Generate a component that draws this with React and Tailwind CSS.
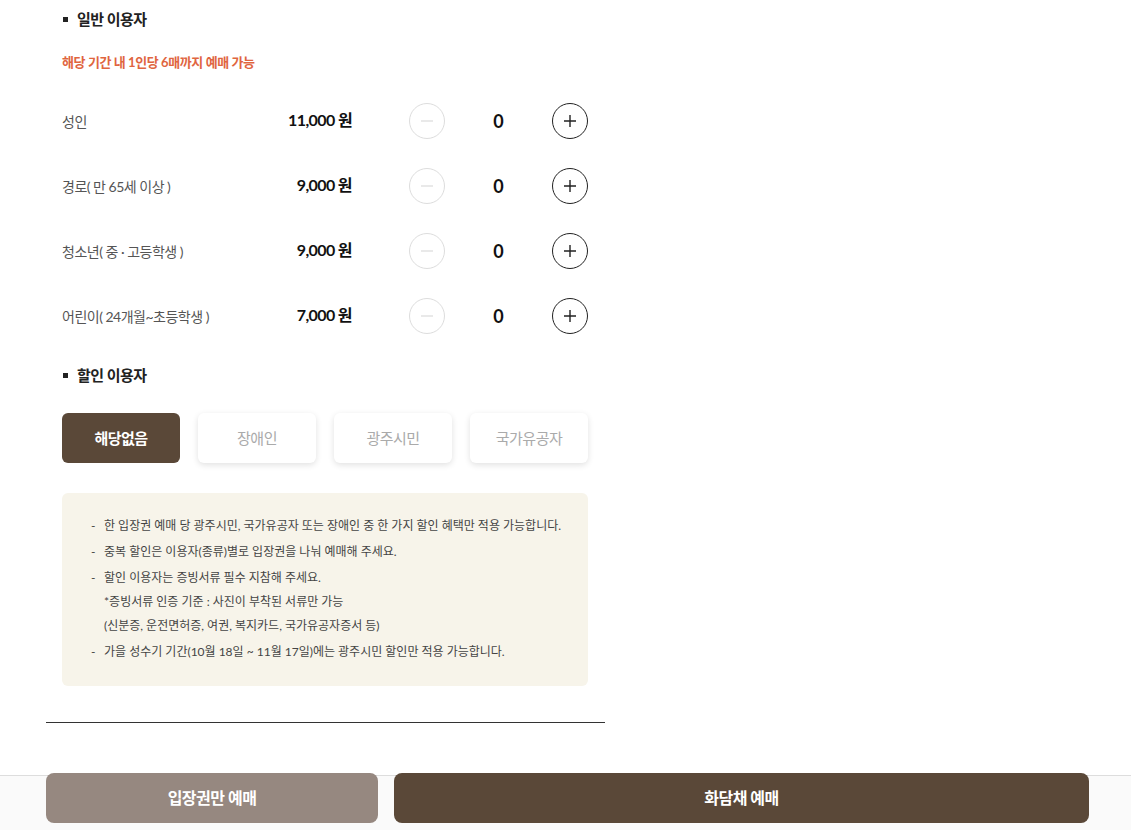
import React from 'react';

const font = { fontFamily: "Lato, 'Noto Sans CJK KR', sans-serif" };

const rows = [
  { label: '성인', price: '11,000 원' },
  { label: '경로( 만 65세 이상 )', price: '9,000 원' },
  { label: '청소년( 중 · 고등학생 )', price: '9,000 원' },
  { label: '어린이( 24개월~초등학생 )', price: '7,000 원' },
];

const discounts = ['해당없음', '장애인', '광주시민', '국가유공자'];

function Heading({ children }) {
  return (
    <div className="flex items-center h-[22px] pl-[1px]">
      <span className="w-[5px] h-[5px] bg-[#222] mr-[9px]" />
      <span className="text-[15px] font-bold text-[#222] tracking-[-0.5px]">{children}</span>
    </div>
  );
}

function Counter() {
  return (
    <div className="flex items-center">
      <button className="w-9 h-9 rounded-full border border-[#ddd] flex items-center justify-center">
        <svg width="14" height="14" viewBox="0 0 14 14">
          <path d="M1 7h12" stroke="#ddd" strokeWidth="1.3" />
        </svg>
      </button>
      <span className="w-[107px] text-center text-[18px] font-bold text-[#111]">0</span>
      <button className="w-9 h-9 rounded-full border border-[#222] flex items-center justify-center">
        <svg width="14" height="14" viewBox="0 0 14 14">
          <path d="M1 7h12M7 1v12" stroke="#222" strokeWidth="1.4" />
        </svg>
      </button>
    </div>
  );
}

export default function App() {
  return (
    <div className="w-[1131px] h-[830px] bg-white relative overflow-hidden" style={font}>
      <div className="pl-[62px] pt-[8px] w-[588px]">
        <Heading>일반 이용자</Heading>
        <p className="mt-[22px] text-[13px] font-bold text-[#e0653f] tracking-[-0.4px] leading-[20px]">
          해당 기간 내 1인당 6매까지 예매 가능
        </p>
        <div className="mt-[31px] flex flex-col gap-[29px]">
          {rows.map((r) => (
            <div key={r.label} className="flex items-center h-9">
              <span className="w-[200px] text-[14px] text-[#555] tracking-[-0.5px]">{r.label}</span>
              <span className="w-[90px] text-right text-[16px] font-bold text-[#111] tracking-[-0.6px] -mt-[2px]">
                {r.price}
              </span>
              <span className="w-[57px]" />
              <Counter />
            </div>
          ))}
        </div>
        <div className="mt-[30px]">
          <Heading>할인 이용자</Heading>
        </div>
        <div className="mt-[27px] flex gap-[18px]">
          {discounts.map((d, i) => (
            <button
              key={d}
              className={
                i === 0
                  ? 'w-[118px] h-[50px] rounded-[6px] bg-[#5a4838] text-white text-[15px] font-bold tracking-[-0.5px]'
                  : 'w-[118px] h-[50px] rounded-[6px] bg-white text-[#aaa] text-[15px] shadow-[0_2px_6px_rgba(0,0,0,0.12)] tracking-[-0.5px]'
              }
            >
              {d}
            </button>
          ))}
        </div>
        <div className="mt-[30px] h-[193px] rounded-[6px] bg-[#f7f4ea] pl-[29px] pt-[21px] text-[12px] text-[#444]">
          <ul className="flex flex-col gap-[2px]">
            <li className="flex leading-[24px]">
              <span className="w-[13px]">-</span>
              <span>한 입장권 예매 당 광주시민, 국가유공자 또는 장애인 중 한 가지 할인 혜택만 적용 가능합니다.</span>
            </li>
            <li className="flex leading-[24px]">
              <span className="w-[13px]">-</span>
              <span>중복 할인은 이용자(종류)별로 입장권을 나눠 예매해 주세요.</span>
            </li>
            <li className="flex leading-[24px]">
              <span className="w-[13px]">-</span>
              <span>
                할인 이용자는 증빙서류 필수 지참해 주세요.
                <br />
                *증빙서류 인증 기준 : 사진이 부착된 서류만 가능
                <br />
                (신분증, 운전면허증, 여권, 복지카드, 국가유공자증서 등)
              </span>
            </li>
            <li className="flex leading-[24px]">
              <span className="w-[13px]">-</span>
              <span>가을 성수기 기간(10월 18일 ~ 11월 17일)에는 광주시민 할인만 적용 가능합니다.</span>
            </li>
          </ul>
        </div>
      </div>
      <div className="ml-[46px] mt-[36px] w-[559px] h-px bg-[#333]" />
      <div className="absolute left-0 right-0 bottom-0 h-[55px] bg-[#fafafa] border-t border-[#ddd]">
        <div className="flex gap-4 pl-[46px] -mt-[3px]">
          <button className="w-[332px] h-[50px] rounded-[8px] bg-[#968880] text-white text-[16px] font-bold tracking-[-0.5px]">
            입장권만 예매
          </button>
          <button className="w-[695px] h-[50px] rounded-[8px] bg-[#5a4838] text-white text-[16px] font-bold tracking-[-0.5px]">
            화담채 예매
          </button>
        </div>
      </div>
    </div>
  );
}
